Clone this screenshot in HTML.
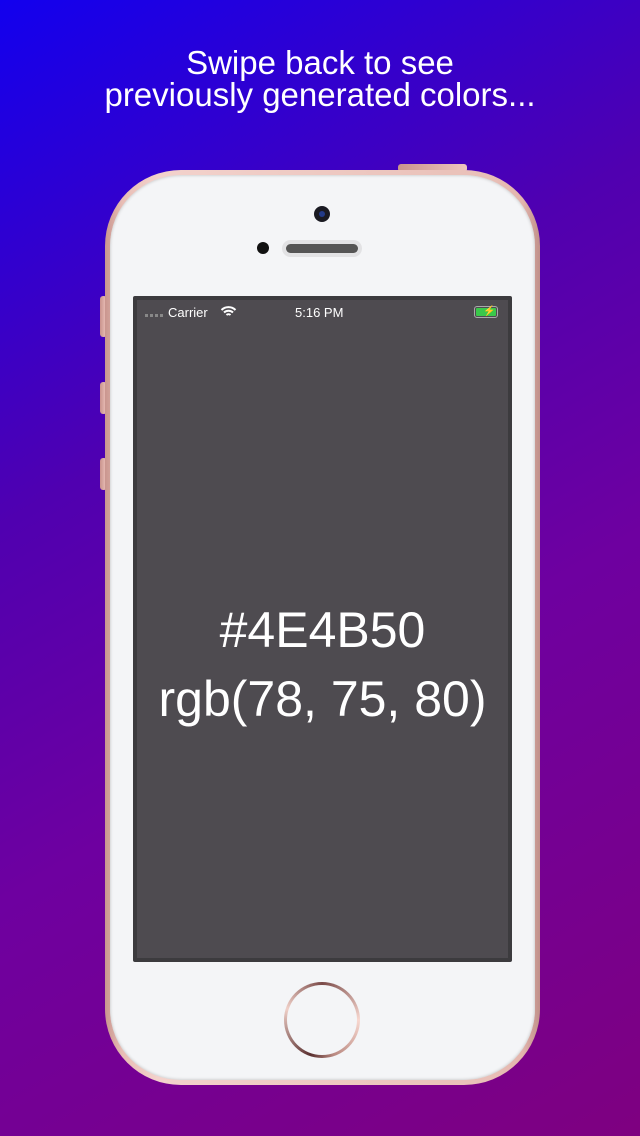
<!DOCTYPE html>
<html><head><style>
body{margin:0;width:640px;height:1136px;overflow:hidden;background:linear-gradient(150deg,#1200ee 0%,#5000b0 35%,#6e00a0 60%,#7e0080 100%);font-family:"Liberation Sans",sans-serif;position:relative}
.t{position:absolute;left:0;width:640px;text-align:center;color:#fff;font-size:33px;line-height:32px;top:47px}
.btn{position:absolute;background:linear-gradient(90deg,#c9938c,#efc6bf);border-radius:3px}
.phone{position:absolute;left:105px;top:170px;width:435px;height:915px;border-radius:76px;background:linear-gradient(90deg,#c9968f,#e8bdb5 4%,#f3d2cc 12%,#e9c0b8 88%,#e3b5ad 96%,#c0908a);}
.body{position:absolute;left:5px;top:5px;right:5px;bottom:5px;border-radius:71px;background:#f4f5f7;box-shadow:inset 0 0 3px #bbb}
.screen{position:absolute;left:133px;top:296px;width:379px;height:666px;background:#3c3b3e;border-radius:2px}
.inner{position:absolute;left:4px;top:4px;right:4px;bottom:4px;background:#4e4b50}
.sb{position:absolute;top:5px;color:#fff;font-size:13px}
.big{position:absolute;left:0;width:100%;text-align:center;color:#fff;font-size:50px}
</style></head><body>
<div class="t">Swipe back to see<br>previously generated colors...</div>
<div class="btn" style="left:398px;top:164px;width:69px;height:8px"></div>
<div class="btn" style="left:100px;top:296px;width:7px;height:41px"></div>
<div class="btn" style="left:100px;top:382px;width:7px;height:32px"></div>
<div class="btn" style="left:100px;top:458px;width:7px;height:32px"></div>
<div class="phone"><div class="body"></div></div>
<div style="position:absolute;left:314px;top:206px;width:16px;height:16px;border-radius:50%;background:#1a1a22"><div style="position:absolute;left:5px;top:5px;width:6px;height:6px;border-radius:50%;background:#223a88"></div></div>
<div style="position:absolute;left:257px;top:242px;width:12px;height:12px;border-radius:50%;background:#111"></div>
<div style="position:absolute;left:282px;top:240px;width:80px;height:17px;border-radius:9px;background:#e2e2e4"></div>
<div style="position:absolute;left:286px;top:244px;width:72px;height:9px;border-radius:5px;background:#555"></div>
<div class="screen"><div class="inner">
<div style="position:absolute;left:8px;top:14px;width:18px;height:3px;background:repeating-linear-gradient(90deg,#888 0 3px,transparent 3px 5px)"></div>
<div class="sb" style="left:31px">Carrier</div>
<svg style="position:absolute;left:83px;top:5px" width="17" height="13" viewBox="0 0 16 13"><path d="M1 5a10 10 0 0 1 14 0M3.5 7.5a6.5 6.5 0 0 1 9 0M6 10a3 3 0 0 1 4 0" stroke="#fff" stroke-width="2" fill="none"/></svg>
<div class="sb" style="left:158px">5:16 PM</div>
<div style="position:absolute;left:337px;top:6px;width:22px;height:10px;border:1px solid #aaa;border-radius:3px"><div style="position:absolute;left:1px;top:1px;right:1px;bottom:1px;background:#3ac84a;border-radius:1px"></div><div style="position:absolute;left:8px;top:-1px;color:#fff;font-size:10px">⚡</div></div>
<div class="big" style="top:301px">#4E4B50</div>
<div class="big" style="top:370px">rgb(78, 75, 80)</div>
</div></div>
<div style="position:absolute;left:284px;top:982px;width:76px;height:76px;border-radius:50%;background:conic-gradient(#7a4a48,#f8d8d0 25%,#b88880 45%,#5a3030 55%,#f0d0c8 80%,#7a4a48);"><div style="position:absolute;left:3px;top:3px;right:3px;bottom:3px;border-radius:50%;background:#f4f5f7"></div></div>
</body></html>
